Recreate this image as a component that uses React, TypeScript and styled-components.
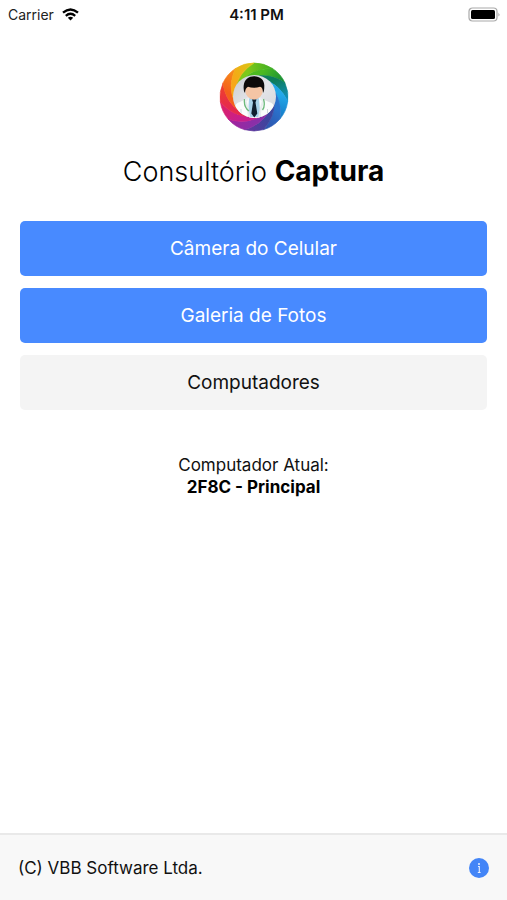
import React from "react";
import styled, { createGlobalStyle } from "styled-components";

const GlobalStyle = createGlobalStyle`
  *, *::before, *::after { box-sizing: border-box; }
  body {
    margin: 0;
    background: #fff;
    color: #111;
    font-family: Inter, "Liberation Sans", sans-serif;
  }
`;

const Screen = styled.div`
  min-height: 100vh;
  display: flex;
  flex-direction: column;
`;

const StatusBar = styled.header`
  display: grid;
  grid-template-columns: 1fr auto 1fr;
  align-items: center;
  height: 28px;
  padding: 0 6px 0 8px;
  font-size: 14px;
`;

const Carrier = styled.div`
  display: flex;
  align-items: center;
  gap: 8px;
  color: #222;
`;

const Clock = styled.time`
  font-size: 15px;
  font-weight: 600;
  padding-left: 4px;
`;

const BatterySlot = styled.div`
  display: flex;
  justify-content: flex-end;
`;

const Content = styled.main`
  flex: 1;
  display: flex;
  flex-direction: column;
  align-items: center;
  padding: 34px 20px 20px;
`;

const Title = styled.h1`
  margin: 20px 0 30px;
  font-size: 27px;
  line-height: 38px;
  font-weight: 300;
  color: #000;

  strong {
    font-size: 28px;
    font-weight: 700;
  }
`;

const Actions = styled.nav`
  align-self: stretch;
  display: flex;
  flex-direction: column;
  gap: 12px;
`;

const ActionButton = styled.button<{ $tone: "primary" | "light" }>`
  height: 55px;
  border: 0;
  border-radius: 5px;
  font: inherit;
  font-size: 19px;
  cursor: pointer;
  background: ${(p) => (p.$tone === "primary" ? "#488aff" : "#f4f4f4")};
  color: ${(p) => (p.$tone === "primary" ? "#fff" : "#111")};
`;

const Current = styled.p`
  margin: 44px 0 0;
  text-align: center;
  font-size: 17px;
  line-height: 22px;

  strong {
    display: block;
    font-weight: 700;
    color: #000;
  }
`;

const Footer = styled.footer`
  display: flex;
  align-items: center;
  justify-content: space-between;
  height: 67px;
  padding: 0 18px;
  border-top: 2px solid #e9e9e9;
  background: #f8f8f8;
  font-size: 17px;
`;

const InfoButton = styled.button`
  display: flex;
  padding: 0;
  border: 0;
  background: none;
  cursor: pointer;
`;

const BLADES: [string, string][] = [
  ["#7cc81a", "#3fae22"],
  ["#4cba20", "#11893a"],
  ["#0d7d5c", "#1292cc"],
  ["#22a8ea", "#1577c4"],
  ["#2a72cc", "#2f4fa8"],
  ["#3d459e", "#6a339c"],
  ["#8a2fa8", "#a5229c"],
  ["#c81f8c", "#e02260"],
  ["#e62a4c", "#f04427"],
  ["#f4601c", "#f7921a"],
  ["#f6a818", "#d8c814"],
];
const SPAN = 360 / BLADES.length;

const polar = (deg: number, r: number) => {
  const a = ((deg - 90) * Math.PI) / 180;
  return { x: 35 + r * Math.cos(a), y: 35 + r * Math.sin(a) };
};

const point = (deg: number, r: number) => {
  const p = polar(deg, r);
  return `${p.x.toFixed(2)} ${p.y.toFixed(2)}`;
};

const blade = (start: number, span: number) => {
  const end = start + span;
  return [
    `M${point(start, 34)}`,
    `A34 34 0 0 1 ${point(end, 34)}`,
    `Q${point(end - 34, 29)} ${point(end - 72, 20)}`,
    `A20 20 0 0 0 ${point(start - 72, 20)}`,
    `Q${point(start - 34, 29)} ${point(start, 34)}Z`,
  ].join("");
};

function Logo() {
  return (
    <svg width="70" height="70" viewBox="0 0 70 70" role="img" aria-label="Consultório Captura">
      <defs>
        <linearGradient id="lens" x1="0" y1="0" x2="1" y2="1">
          <stop offset="0" stopColor="#c9ccd2" />
          <stop offset=".5" stopColor="#e4e5e9" />
          <stop offset="1" stopColor="#d3d5da" />
        </linearGradient>
        <clipPath id="lensClip"><circle cx="35.5" cy="34.5" r="21.5" /></clipPath>
        {BLADES.map(([from, to], i) => {
          const a = polar(i * SPAN - 12, 30);
          const b = polar(i * SPAN + SPAN, 34);
          return (
            <linearGradient key={from} id={`blade${i}`} gradientUnits="userSpaceOnUse" x1={a.x} y1={a.y} x2={b.x} y2={b.y}>
              <stop offset="0" stopColor={from} />
              <stop offset="1" stopColor={to} />
            </linearGradient>
          );
        })}
      </defs>
      {BLADES.map(([from], i) => (
        <path key={from} d={blade(i * SPAN, SPAN)} fill={`url(#blade${i})`} stroke={`url(#blade${i})`} strokeWidth=".7" />
      ))}
      <circle cx="35.5" cy="34.500" r="21.500" fill="url(#lens)" />
      <g clipPath="url(#lensClip)">
        <path d="M16 60V46q0-5 5-6l8-4h12l9 4q5 1 5 6v14z" fill="#fbfcfc" />
        <path d="M31 32h8v5l-4 4-4-4z" fill="#dfa588" />
        <path d="M30 36l5 2 5-2 1.500 19H29z" fill="#a9d3ea" />
        <path d="M33 37.500h4.500l-1 3 1.800 11-3 4-3-4 1.700-11z" fill="#10202f" />
        <path d="M29.500 36l-3 3 2 7 2 10M41 36l3 3-2 7-2 10" fill="none" stroke="#e8edee" strokeWidth="2" />
        <path d="M25.500 37q-1 8 4.500 12M44.500 37q2 7-1 11" fill="none" stroke="#6dba7c" strokeWidth="1.300" />
        <path d="M22 47v10M48.500 47v10" stroke="#cfd7da" />
      </g>
      <ellipse cx="35" cy="28.500" rx="8.800" ry="8.800" fill="#f4c5a5" />
      <path d="M26 31q-1.800-2-1.300-7.500c.8-6.500 5.300-9.300 10.300-9.300 6 0 10.300 3.600 10.300 9.300 0 4-.3 6-1.300 7.500-.2-4-1-5.700-3-6.200-4 1.400-8.500 1.200-12 0-2 1-2.800 2.700-3 6.200z" fill="#0c0a0a" />
    </svg>
  );
}

function WifiIcon() {
  return (
    <svg width="17" height="13" viewBox="0 0 17 13" aria-hidden="true">
      <g fill="none" stroke="#000" strokeWidth="2.300">
        <path d="M1 4.700q7.500-6.500 15 0" />
        <path d="M3.800 7.800q4.700-4 9.400 0" />
      </g>
      <path d="M5.800 9.800q2.700-2 5.400 0L8.500 12.600z" fill="#000" />
    </svg>
  );
}

function BatteryIcon() {
  return (
    <svg width="33" height="15" viewBox="0 0 33 15" aria-label="Bateria" role="img">
      <rect x="1" y="1" width="28" height="13" rx="3.500" fill="#fff" stroke="#aaa" strokeWidth="1.200" />
      <rect x="3" y="3" width="24" height="9" rx="1.500" fill="#000" />
      <path d="M30.500 5.500q1.800 2 0 4z" fill="#999" />
    </svg>
  );
}

function InfoIcon() {
  return (
    <svg width="20" height="20" viewBox="0 0 20 20" aria-hidden="true">
      <circle cx="10" cy="10" r="10" fill="#4385f7" />
      <circle cx="10" cy="6" r="1" fill="#e9f1ff" />
      <path d="M9 8.500h1.300v6M8.800 14.500h2.800" fill="none" stroke="#e9f1ff" strokeWidth="1.100" />
    </svg>
  );
}

export default function App() {
  return (
    <>
      <GlobalStyle />
      <Screen>
        <StatusBar>
          <Carrier>Carrier <WifiIcon /></Carrier>
          <Clock>4:11 PM</Clock>
          <BatterySlot><BatteryIcon /></BatterySlot>
        </StatusBar>
        <Content>
          <Logo />
          <Title>Consultório <strong>Captura</strong></Title>
          <Actions>
            <ActionButton type="button" $tone="primary">Câmera do Celular</ActionButton>
            <ActionButton type="button" $tone="primary">Galeria de Fotos</ActionButton>
            <ActionButton type="button" $tone="light">Computadores</ActionButton>
          </Actions>
          <Current>
            Computador Atual:
            <strong>2F8C - Principal</strong>
          </Current>
        </Content>
        <Footer>
          <span>(C) VBB Software Ltda.</span>
          <InfoButton type="button" aria-label="Informações"><InfoIcon /></InfoButton>
        </Footer>
      </Screen>
    </>
  );
}
